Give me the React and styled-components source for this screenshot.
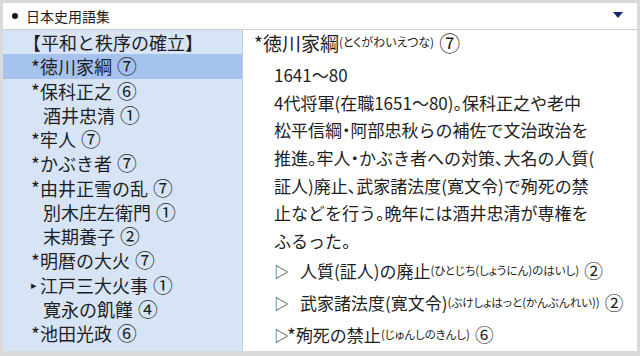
import React from "react";
import styled, { createGlobalStyle } from "styled-components";

const GlobalStyle = createGlobalStyle`
  html, body {
    margin: 0;
    padding: 0;
    background: #dcdcdc;
  }
  body {
    font-family: "Noto Sans CJK JP", "Noto Sans", sans-serif;
    color: #1e1e1e;
  }
`;

const Frame = styled.div`
  width: 640px;
  height: 356px;
  box-sizing: border-box;
  border: 3px solid #dadada;
  border-bottom-width: 5px;
  display: flex;
  flex-direction: column;
  overflow: hidden;
`;

const Header = styled.div`
  height: 26px;
  flex: none;
  background: #fff;
  border-bottom: 1px solid #cfcfcf;
  display: flex;
  align-items: center;
  padding: 0 10px 0 9px;
`;

const Bullet = styled.span`
  width: 6px;
  height: 6px;
  border-radius: 50%;
  background: #111;
  margin-right: 8px;
`;

const HeaderTitle = styled.span`
  font-size: 14px;
  line-height: 1;
  flex: 1;
`;

const DropArrow = styled.span`
  width: 0;
  height: 0;
  border-left: 5px solid transparent;
  border-right: 5px solid transparent;
  border-top: 6px solid #13276b;
  margin-right: 4px;
  margin-top: -2px;
`;

const Main = styled.div`
  flex: 1;
  display: flex;
  min-height: 0;
`;

const Sidebar = styled.ul`
  width: 239px;
  flex: none;
  margin: 0;
  padding: 0;
  list-style: none;
  background: #d6e4f5;
  border-right: 1px solid #c3cfde;
`;

const Row = styled.li`
  height: 24.25px;
  display: flex;
  align-items: center;
  padding-left: ${(p) => p.$indent}px;
  font-size: 18px;
  line-height: 1;
  white-space: nowrap;
  background: ${(p) => (p.$selected ? "#a6c3ee" : "transparent")};
`;

const Marker = styled.span`
  display: inline-block;
  width: ${(p) => p.$w}px;
  font-size: ${(p) => p.$size}px;
  flex: none;
`;

const Num = styled.span`
  margin-left: 5px;
  font-size: 1.1em;
  line-height: 1;
`;

const Content = styled.div`
  flex: 1;
  background: #fff;
  padding-left: 11px;
  white-space: nowrap;
`;

const Title = styled.div`
  height: 24px;
  display: flex;
  align-items: center;
  font-size: 19px;
  line-height: 1;
`;

const Ruby = styled.span`
  font-size: ${(p) => p.$size || 11.5}px;
  font-feature-settings: "palt";
`;

const Body = styled.div`
  margin-top: 7px;
  padding-left: 20px;
  font-size: 17px;
`;

const Line = styled.div`
  height: 27.7px;
  line-height: 27.7px;
`;

const Punct = styled.span`
  font-feature-settings: "palt";
`;

const Item = styled.div`
  height: 32px;
  display: flex;
  align-items: center;
  font-size: 17px;
  line-height: 1;
  &:first-of-type {
    margin-top: 2px;
  }
`;

const Tri = styled.span`
  font-size: 15px;
  width: ${(p) => p.$w}px;
  flex: none;
`;

const Star = styled.span`
  font-size: 19px;
`;

const list = [
  { mark: "", text: "【平和と秩序の確立】", num: "", indent: 20 },
  { mark: "*", text: "徳川家綱", num: "⑦", selected: true },
  { mark: "*", text: "保科正之", num: "⑥" },
  { mark: " ", text: "酒井忠清", num: "①" },
  { mark: "*", text: "牢人", num: "⑦" },
  { mark: "*", text: "かぶき者", num: "⑦" },
  { mark: "*", text: "由井正雪の乱", num: "⑦" },
  { mark: " ", text: "別木庄左衛門", num: "①" },
  { mark: " ", text: "末期養子", num: "②" },
  { mark: "*", text: "明暦の大火", num: "⑦" },
  { mark: "▸", text: "江戸三大火事", num: "①" },
  { mark: " ", text: "寛永の飢饉", num: "④" },
  { mark: "*", text: "池田光政", num: "⑥" },
];

const lines = [
  "1641～80",
  "4代将軍(在職1651～80)。保科正之や老中",
  "松平信綱・阿部忠秋らの補佐で文治政治を",
  "推進。牢人・かぶき者への対策、大名の人質(",
  "証人)廃止、武家諸法度(寛文令)で殉死の禁",
  "止などを行う。晩年には酒井忠清が専権を",
  "ふるった。",
];

const items = [
  { star: false, text: "人質(証人)の廃止", ruby: "(ひとじち(しょうにん)のはいし)", num: "②" },
  { star: false, text: "武家諸法度(寛文令)", ruby: "(ぶけしょはっと(かんぶんれい))", num: "②" },
  { star: true, text: "殉死の禁止", ruby: "(じゅんしのきんし)", num: "⑥" },
];

// punctuation is set half-width in the reference
function withPunct(text) {
  return text.split(/([。、・])/).map((part, i) =>
    /^[。、・]$/.test(part) ? <Punct key={i}>{part}</Punct> : part
  );
}

const markerWidth = { "*": 9, "▸": 9, " ": 12 };
const markerSize = { "*": 19, "▸": 11, " ": 17 };

export default function App() {
  return (
    <>
      <GlobalStyle />
      <Frame>
        <Header>
          <Bullet />
          <HeaderTitle>日本史用語集</HeaderTitle>
          <DropArrow />
        </Header>
        <Main>
          <Sidebar>
            {list.map((r, i) => (
              <Row key={i} $indent={r.indent || 28} $selected={r.selected}>
                {r.mark !== "" && (
                  <Marker $w={markerWidth[r.mark]} $size={markerSize[r.mark]}>
                    {r.mark === " " ? "" : r.mark}
                  </Marker>
                )}
                {r.text}
                {r.num && <Num>{r.num}</Num>}
              </Row>
            ))}
          </Sidebar>
          <Content>
            <Title>
              <Star>*</Star>徳川家綱<Ruby $size={12}>(とくがわいえつな)</Ruby>
              <Num>⑦</Num>
            </Title>
            <Body>
              {lines.map((l, i) => (
                <Line key={i}>{withPunct(l)}</Line>
              ))}
              {items.map((it, i) => (
                <Item key={i}>
                  <Tri $w={it.star ? 13 : 26}>▷</Tri>
                  {it.star && <Star>*</Star>}
                  {it.text}
                  <Ruby>{it.ruby}</Ruby>
                  <Num>{it.num}</Num>
                </Item>
              ))}
            </Body>
          </Content>
        </Main>
      </Frame>
    </>
  );
}
